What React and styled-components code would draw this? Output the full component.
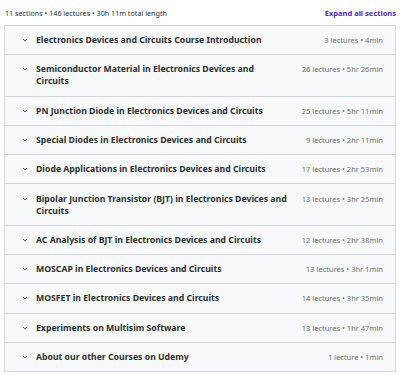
import React from 'react'
import styled, { createGlobalStyle } from 'styled-components'

const GlobalStyle = createGlobalStyle`
    body {
        margin: 0;
        background: #ffffff;
        font-family: "Noto Sans", Inter, sans-serif;
        color: #2d2f31;
    }
`
const Page = styled.div`
    padding: 5px 4px 0 4px;
`
const TopBar = styled.div`
    display: flex;
    justify-content: space-between;
    align-items: center;
    height: 16px;
    margin-bottom: 4px;
`
const Summary = styled.span`
    font-size: 7.2px;
    color: #2d2f31;
    padding-left: 1px;
`
const ExpandAll = styled.button`
    border: none;
    background: none;
    padding: 0;
    font-family: inherit;
    font-size: 7.5px;
    font-weight: 700;
    color: #5624d0;
    cursor: pointer;
`
const Accordion = styled.div`
    border: 1px solid #d1d7dc;
    border-bottom: none;
`
const Row = styled.div`
    display: flex;
    align-items: flex-start;
    gap: 7px;
    padding: 8.15px 12px 8.15px 16px;
    background: #f7f9fa;
    border-bottom: 1px solid #d1d7dc;
`
const Chevron = styled.svg`
    flex: none;
    width: 8px;
    height: 8px;
    margin-top: 2px;
`
const Title = styled.span`
    flex: 1;
    font-size: 8.7px;
    font-weight: 700;
    line-height: 12px;
    color: #2d2f31;
`
const Meta = styled.span`
    flex: none;
    min-width: 82px;
    margin-left: 6px;
    text-align: right;
    font-size: 7.5px;
    line-height: 12px;
    color: #6a6f73;
`

const sections = [
    { title: 'Electronics Devices and Circuits Course Introduction', meta: '3 lectures • 4min' },
    { title: 'Semiconductor Material in Electronics Devices and Circuits', meta: '26 lectures • 5hr 26min' },
    { title: 'PN Junction Diode in Electronics Devices and Circuits', meta: '25 lectures • 5hr 11min' },
    { title: 'Special Diodes in Electronics Devices and Circuits', meta: '9 lectures • 2hr 11min' },
    { title: 'Diode Applications in Electronics Devices and Circuits', meta: '17 lectures • 2hr 53min' },
    { title: 'Bipolar Junction Transistor (BJT) in Electronics Devices and Circuits', meta: '13 lectures • 3hr 25min' },
    { title: 'AC Analysis of BJT in Electronics Devices and Circuits', meta: '12 lectures • 2hr 38min' },
    { title: 'MOSCAP in Electronics Devices and Circuits', meta: '13 lectures • 3hr 1min' },
    { title: 'MOSFET in Electronics Devices and Circuits', meta: '14 lectures • 3hr 35min' },
    { title: 'Experiments on Multisim Software', meta: '13 lectures • 1hr 47min' },
    { title: 'About our other Courses on Udemy', meta: '1 lecture • 1min' },
]

function App() {
  return (
    <Page>
        <GlobalStyle />
        <TopBar>
            <Summary>11 sections • 146 lectures • 30h 11m total length</Summary>
            <ExpandAll>Expand all sections</ExpandAll>
        </TopBar>
        <Accordion>
            {sections.map((s, idx) => (
                <Row key={idx}>
                    <Chevron viewBox="0 0 24 24">
                        <path d="M7 10l5 4.5 5-4.5" fill="none" stroke="#2d2f31" strokeWidth="2.6" strokeLinecap="round" strokeLinejoin="round"/>
                    </Chevron>
                    <Title>{s.title}</Title>
                    <Meta>{s.meta}</Meta>
                </Row>
            ))}
        </Accordion>
    </Page>
  )
}

export default App
